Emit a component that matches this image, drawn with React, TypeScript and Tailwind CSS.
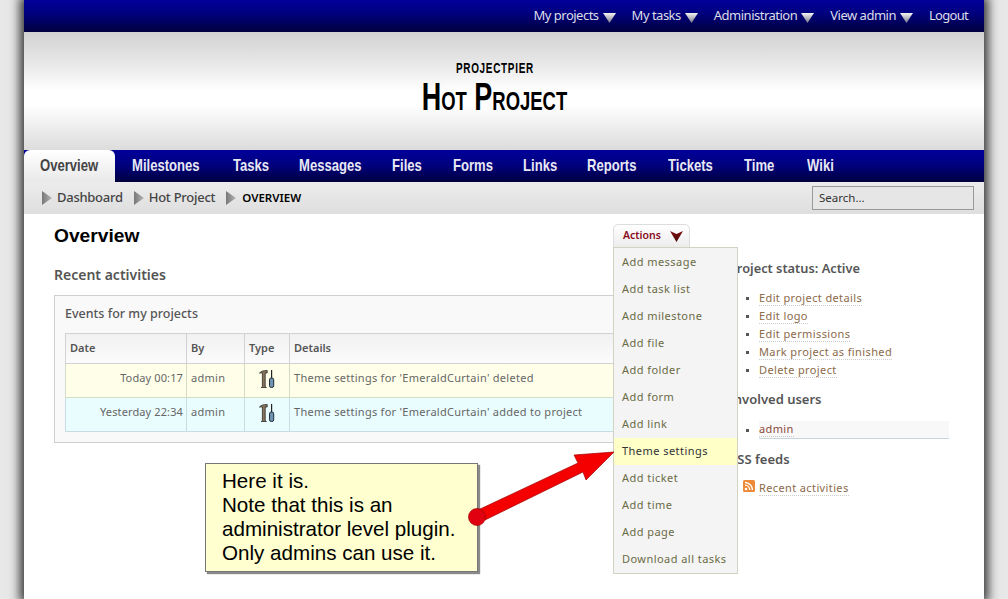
const sans = "font-['Noto_Sans','Open_Sans',sans-serif]";
const arial = "font-['Liberation_Sans',sans-serif]";

function Tri({ className = "", id, from, to, d = "M0 1 L13 1 L6.5 11 Z" }: { className?: string; id: string; from: string; to: string; d?: string }) {
  return (
    <svg width="13" height="11" viewBox="0 0 13 11" className={className}>
      <defs>
        <linearGradient id={id} x1="0" y1="0" x2="0" y2="1">
          <stop offset="0" stopColor={from} />
          <stop offset="1" stopColor={to} />
        </linearGradient>
      </defs>
      <path d={d} fill={`url(#${id})`} />
    </svg>
  );
}

function Crumb() {
  return (
    <svg width="10" height="14" viewBox="0 0 10 14" className="shrink-0">
      <defs>
        <linearGradient id="cr" x1="0" y1="0" x2="1" y2="0">
          <stop offset="0" stopColor="#777" />
          <stop offset="1" stopColor="#b5b5b5" />
        </linearGradient>
      </defs>
      <path d="M0 0 L10 7 L0 14 Z" fill="url(#cr)" />
    </svg>
  );
}

function Tool() {
  return (
    <svg width="16" height="18" viewBox="0 0 16 18">
      <path d="M0.5 3.2 Q2 0.5 8.2 0.5 L8.2 3 L6.2 3 L6.2 16.5 L7.4 17.5 L2.2 17.5 L3.4 16.5 L3.4 3 Q2 2.6 0.5 3.2 Z" fill="#8a7558" stroke="#2b2b2b" strokeWidth="0.8" />
      <path d="M12 0 L13.2 0 L13.2 8 L12 8 Z" fill="#222" />
      <rect x="10.5" y="8" width="4.2" height="9.5" rx="1.8" fill="#6f93b0" stroke="#1d2b38" strokeWidth="1" />
    </svg>
  );
}

const tabs: [string, string][] = [
  ["Milestones", "w-[101px]"],
  ["Tasks", "w-[66px]"],
  ["Messages", "w-[93px]"],
  ["Files", "w-[61px]"],
  ["Forms", "w-[70px]"],
  ["Links", "w-[64px]"],
  ["Reports", "w-[81px]"],
  ["Tickets", "w-[76px]"],
  ["Time", "w-[63px]"],
  ["Wiki", "w-[59px]"],
];
const menu = ["Add message", "Add task list", "Add milestone", "Add file", "Add folder", "Add form", "Add link", "Theme settings", "Add ticket", "Add time", "Add page", "Download all tasks"];
const top = ["My projects", "My tasks", "Administration", "View admin"];
const links = ["Edit project details", "Edit logo", "Edit permissions", "Mark project as finished", "Delete project"];

export default function App() {
  return (
    <div className={`relative h-[599px] w-[1008px] overflow-hidden bg-[#e8e8e8] ${sans}`}>
      <div className="relative ml-[24px] h-[599px] w-[960px] bg-white shadow-[0_0_10px_4px_rgba(30,30,30,0.9)]">
        {/* top bar */}
        <div className="flex h-[32px] items-center justify-end bg-[linear-gradient(#00009a,#00007f_40%,#00003f)] pr-[16px] text-[13px] text-[#dcdce8]">
          {top.map((t, i) => (
            <div key={t} className="mr-[16px] flex items-center">
              <span className="tracking-[-0.5px]">{t}</span>
              <Tri id={`t${i}`} from="#f4f4f4" to="#77778a" className="ml-[4px] mt-[2px]" />
            </div>
          ))}
          <span className="tracking-[-0.7px]">Logout</span>
        </div>
        {/* header */}
        <div className="flex h-[118px] flex-col items-center bg-[linear-gradient(#d2d2d2,#e6e6e6_25%,#ffffff_50%,#ffffff_62%,#dcdcdc)] pt-[28px] text-black">
          <div className={`ml-[-18px] scale-x-[0.71] text-[14px] font-bold leading-[16px] tracking-[1px] ${arial}`}>PROJECTPIER</div>
          <div className={`ml-[-20px] mt-[1px] scale-x-[0.71] whitespace-nowrap text-[38px] font-bold leading-[40px] ${arial}`}>
            H<span className="text-[26px]">OT</span> P<span className="text-[26px]">ROJECT</span>
          </div>
        </div>
        {/* tabs */}
        <div className={`flex h-[32px] items-stretch bg-[linear-gradient(#00009a,#000080_45%,#00003f)] text-[17px] font-bold text-[#e8e8f4] ${arial}`}>
          <div className="flex w-[91px] items-center rounded-t-[6px] bg-[linear-gradient(#ffffff,#e9e9e9)] pl-[16px] text-[#444]">
            <span className="origin-left scale-x-[0.77]">Overview</span>
          </div>
          {tabs.map(([t, w]) => (
            <div key={t} className={`flex items-center pl-[17px] ${w}`}>
              <span className="origin-left scale-x-[0.77]">{t}</span>
            </div>
          ))}
        </div>
        {/* breadcrumb */}
        <div className="flex h-[32px] items-center bg-[linear-gradient(#ececec,#dedede)] pl-[18px] pr-[10px] text-[13px] tracking-[-0.27px]">
          <Crumb />
          <span className="ml-[5px] font-medium text-[#444]">Dashboard</span>
          <span className="ml-[11px]"><Crumb /></span>
          <span className="ml-[5px] font-medium text-[#444]">Hot Project</span>
          <span className="ml-[11px]"><Crumb /></span>
          <span className="ml-[6px] text-[11.5px] font-semibold tracking-normal text-black">OVERVIEW</span>
          <div className="ml-auto flex h-[24px] w-[162px] items-center border border-[#999] bg-[#e6e6e6] pl-[6px] text-[11.5px] tracking-normal text-[#333]">Search...</div>
        </div>
        {/* content */}
        <div className="flex pl-[30px]">
          <div className="w-[666px] shrink-0">
            <div className="flex h-[43px] items-center">
              <h1 className={`${arial} w-[86px] pt-[2px] text-[19.2px] font-bold text-black`}>Overview</h1>
              <div className="relative ml-[473px] mt-[1px]">
                <div className="flex h-[24px] w-[77px] items-center rounded-t-[5px] border border-[#ddd] bg-[linear-gradient(#ffffff,#ececec)] pl-[9px] text-[10.5px] font-semibold text-[#8a0d1d]">
                  Actions
                  <Tri id="act" from="#7c0c10" to="#4c0a0a" d="M0 0 L6.5 3 L13 0 L6.5 11 Z" className="ml-[9px]" />
                </div>
              </div>
            </div>
            <div className="mt-[8px] text-[14px] font-semibold leading-[19px] text-[#555]">Recent activities</div>
            <div className="mt-[11px] h-[148px] border border-[#cfcfcf] bg-[#f9f9f9] px-[10px] pt-[9px]">
              <div className="text-[12.5px] font-medium text-[#555]">Events for my projects</div>
              <table className="mt-[9px] w-full table-fixed border-collapse text-[11px] tracking-[0.28px] text-[#666]">
                <colgroup>
                  <col className="w-[121px]" />
                  <col className="w-[58px]" />
                  <col className="w-[45px]" />
                  <col />
                </colgroup>
                <tbody>
                  <tr className="h-[30px] bg-[linear-gradient(#f1f1f1,#fbfbfb)] text-left font-semibold tracking-normal text-[#555]">
                    {["Date", "By", "Type", "Details"].map((h) => (
                      <td key={h} className="border border-[#d2d2d2] px-[4px]">{h}</td>
                    ))}
                  </tr>
                  <tr className="h-[34px] bg-[#ffffe9]">
                    <td className="border border-[#d3dcc7] pb-[4px] pl-[4px] pr-[3px] text-right tracking-[0.12px]">Today 00:17</td>
                    <td className="border border-[#d3dcc7] px-[4px] pb-[4px]">admin</td>
                    <td className="border border-[#d3dcc7] px-[4px] pb-[3px]"><div className="flex justify-center"><Tool /></div></td>
                    <td className="border border-[#d3dcc7] px-[4px] pb-[4px] whitespace-nowrap">Theme settings for 'EmeraldCurtain' deleted</td>
                  </tr>
                  <tr className="h-[34px] bg-[#e9fdff]">
                    <td className="border border-[#c8dde3] pb-[4px] pl-[4px] pr-[3px] text-right tracking-[0.12px]">Yesterday 22:34</td>
                    <td className="border border-[#c8dde3] px-[4px] pb-[4px]">admin</td>
                    <td className="border border-[#c8dde3] px-[4px] pb-[3px]"><div className="flex justify-center"><Tool /></div></td>
                    <td className="border border-[#c8dde3] px-[4px] pb-[4px] whitespace-nowrap">Theme settings for 'EmeraldCurtain' added to project</td>
                  </tr>
                </tbody>
              </table>
            </div>
          </div>
          {/* sidebar */}
          <div className="ml-[9px] w-[220px] pt-[45px] text-[11px] tracking-[0.38px]">
            <div className="text-[12.8px] font-semibold leading-[18px] tracking-normal text-[#555]">Project status: Active</div>
            <ul className="mt-[12px] ml-[17px] list-none">
              {links.map((l) => (
                <li key={l} className="flex h-[18px] items-center text-[#8c6a4a]">
                  <span className="mr-[10px] h-[3px] w-[3px] bg-[#555]" />
                  <span className="border-b border-dotted border-[#ccc] leading-[14px]">{l}</span>
                </li>
              ))}
            </ul>
            <div className="mt-[11px] text-[13px] font-semibold leading-[18px] tracking-normal text-[#555]">Involved users</div>
            <div className="mt-[13px] ml-[17px] flex items-center text-[#8c4a3a]">
              <span className="mr-[10px] h-[3px] w-[3px] shrink-0 bg-[#555]" />
              <div className="flex h-[18px] w-[190px] items-center border-b border-[#c8d4de] bg-[#f8f8f8]">
                <span className="border-b border-dotted border-[#ccc] leading-[14px]">admin</span>
              </div>
            </div>
            <div className="mt-[11px] text-[13px] font-semibold leading-[18px] tracking-normal text-[#555]">RSS feeds</div>
            <div className="mt-[12px] ml-[14px] flex items-center text-[#8c6a4a]">
              <svg width="12" height="12" viewBox="0 0 12 12" className="mr-[4px] mb-[4px]">
                <rect width="12" height="12" rx="1.5" fill="#ec8a3a" />
                <circle cx="3" cy="9" r="1.3" fill="#fff" />
                <path d="M2 5.2 A5 5 0 0 1 6.8 10" stroke="#fff" strokeWidth="1.3" fill="none" />
                <path d="M2 2.5 A7.6 7.6 0 0 1 9.5 10" stroke="#fff" strokeWidth="1.3" fill="none" />
              </svg>
              <span className="border-b border-dotted border-[#ccc] leading-[14px]">Recent activities</span>
            </div>
          </div>
        </div>

        {/* actions dropdown overlay */}
        <div className="absolute left-[589px] top-[247px] w-[125px] border border-[#d3d3c4] bg-[#f4f4f4] pt-[1px] text-[11px] tracking-[0.45px] text-[#6b6b45]">
          {menu.map((m) => (
            <div key={m} className={`flex h-[27px] items-center pl-[8px] ${m === "Theme settings" ? "bg-[#ffffc8] text-[#333]" : ""}`}>{m}</div>
          ))}
        </div>

        {/* callout */}
        <div className={`absolute left-[181px] top-[463px] h-[109px] w-[273px] border border-[#777] bg-[#ffffcf] pl-[16px] pt-[5px] text-[20.6px] leading-[24px] text-black shadow-[2px_2px_1px_#8a8a8a] ${arial}`}>
          Here it is.<br />Note that this is an<br />administrator level plugin.<br />Only admins can use it.
        </div>
        <svg className="absolute left-[440px] top-[445px]" width="160" height="85" viewBox="0 0 160 85">
          <path d="M14 65 L114 18 L110 10 L150 7 L122 35 L119 27 L21 75 Z" fill="#f40000" stroke="#a00000" strokeWidth="0.7" />
          <circle cx="13" cy="72" r="8.5" fill="#e00010" stroke="#a00000" strokeWidth="0.7" />
        </svg>
      </div>
    </div>
  );
}
